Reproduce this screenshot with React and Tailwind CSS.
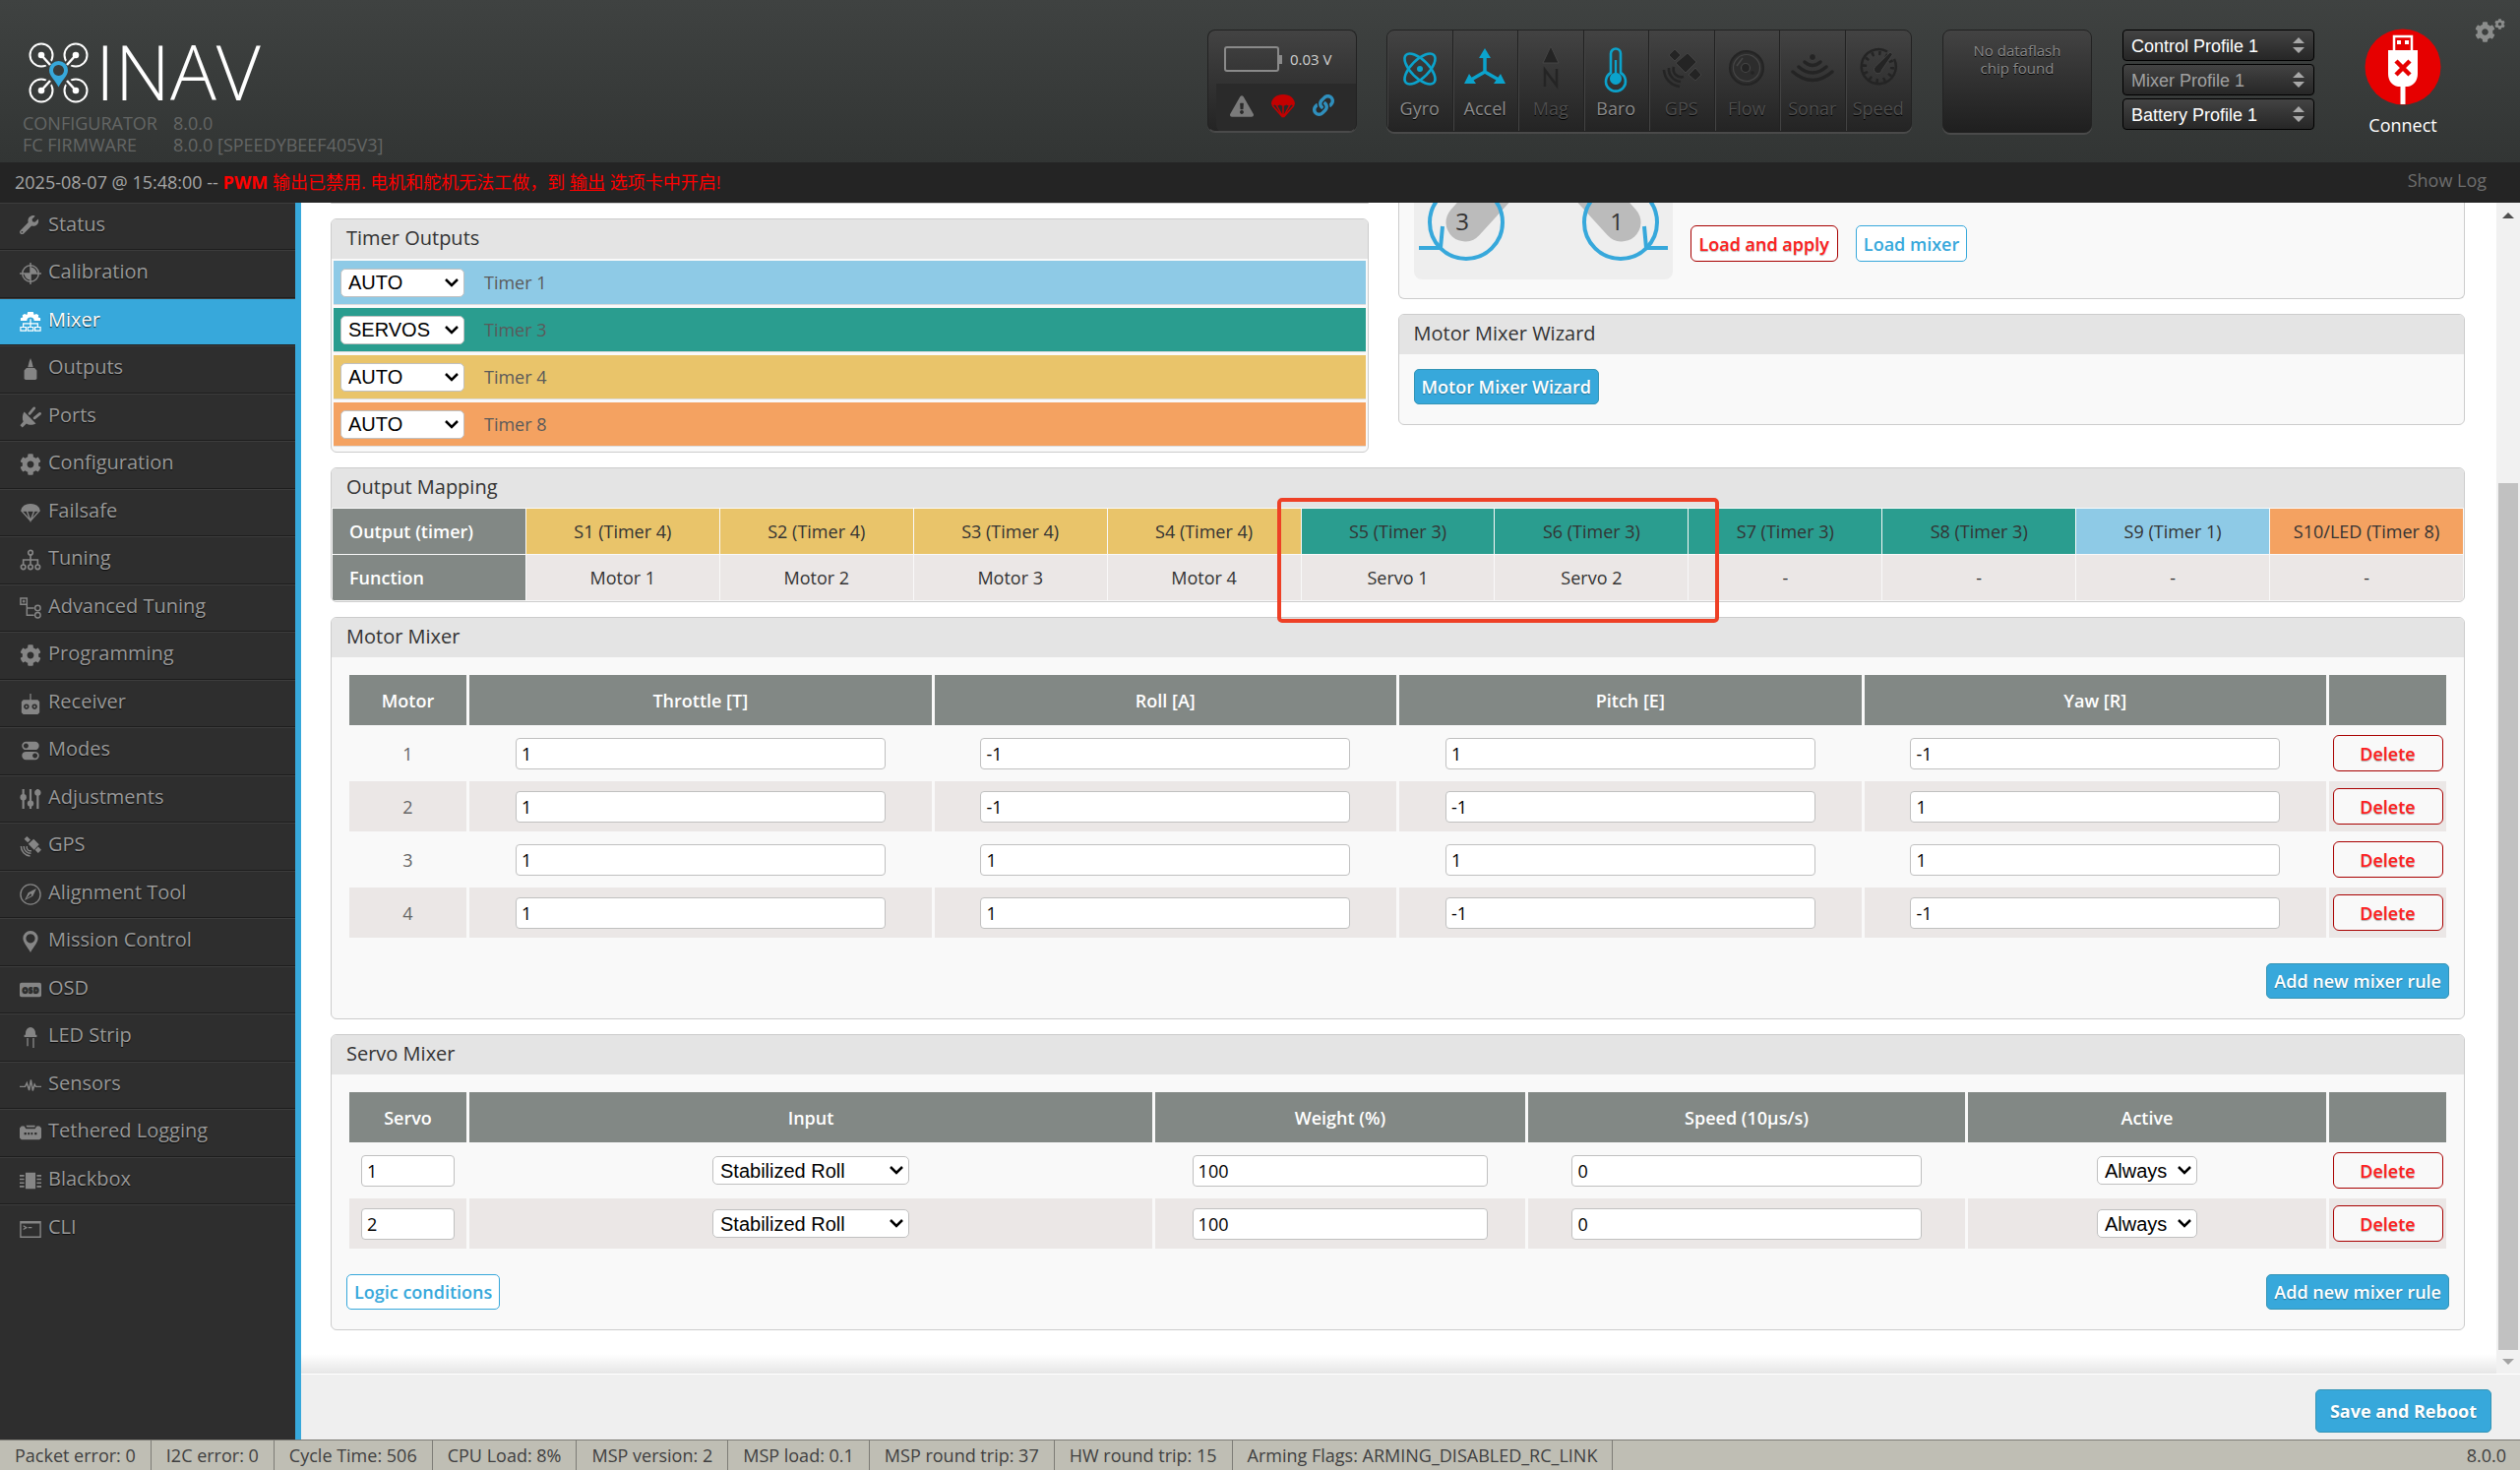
import { useState } from 'react'
import { FaWrench, FaCog, FaExclamationTriangle, FaLink } from 'react-icons/fa'

const sidebarItems = [
  { label: 'Status', icon: <FaWrench className="size-[21px]" /> },
  {
    label: 'Calibration',
    icon: (
      <>
        <circle cx="12" cy="12" r="9" fill="none" stroke="currentColor" strokeWidth="1.6" />
        <path d="M12 0v24M0 12h24" stroke="currentColor" strokeWidth="1.6" />
        <path d="M12 12V5a7 7 0 0 1 7 7zM12 12v7a7 7 0 0 1-7-7z" />
      </>
    ),
  },
  {
    label: 'Mixer',
    icon: (
      <>
        <path d="M1 11V8l2.500-.8L3 4.500l2.500-1.300L8 4.300 9 1h6l1 3.300 2.500-1.100L21 4.500l-.5 2.700L23 8v3h-7a4 4 0 0 0-8 0z" />
        <path d="M12 9v9M4 18v-4h16v4" fill="none" stroke="currentColor" strokeWidth="1.400" />
        <path d="M1 18h6v4H1zM9 18h6v4H9zM17 18h6v4h-6z" fill="none" stroke="currentColor" strokeWidth="1.300" />
      </>
    ),
  },
  { label: 'Outputs', icon: <path d="M5 23v-9.500L7.500 11h9l2.500 2.500V23l-1.500 1h-11zM9 10l1.500-6L12 0l1.500 4L15 10z" /> },
  {
    label: 'Ports',
    icon: (
      <>
        <path d="M5 6l13 13c-3.500 2-8 2-10.500 0L3 23.500.5 21 4 17C2.500 14 3 9 5 6z" />
        <path d="M11 8l5-6M16.500 13l6-5" stroke="currentColor" strokeWidth="3" strokeLinecap="round" />
      </>
    ),
  },
  { label: 'Configuration', icon: <FaCog className="size-6" /> },
  {
    label: 'Failsafe',
    icon: (
      <path
        d="M2 10C3 5 7 3 12 3s9 2 10 7L12 21zM2 10h20M8 10l4 11 4-11"
        fill="none"
        stroke="currentColor"
        strokeWidth="1.500"
      />
    ),
    cap: 'M2 10C3 5 7 3 12 3s9 2 10 7z',
  },
  {
    label: 'Tuning',
    icon: (
      <g fill="none" stroke="currentColor" strokeWidth="1.800">
        <circle cx="12" cy="4" r="2.500" />
        <circle cx="4" cy="20" r="2.500" />
        <circle cx="12" cy="20" r="2.500" />
        <circle cx="20" cy="20" r="2.500" />
        <path d="M12 6.500v11M4 17.500V12h16v5.500" />
      </g>
    ),
  },
  {
    label: 'Advanced Tuning',
    icon: (
      <g fill="none" stroke="currentColor" strokeWidth="1.600">
        <path d="M1 1h7v7H1zM4.500 3v3M3 4.500h3M8 8v12h8M8 12h8" />
        <circle cx="20" cy="12" r="3" />
        <circle cx="20" cy="20" r="3" />
      </g>
    ),
  },
  { label: 'Programming', icon: <FaCog className="size-6" /> },
  {
    label: 'Receiver',
    icon: (
      <path
        fillRule="evenodd"
        d="M11.300 1h1.400v7H20l2 2v12l-2 2H4l-2-2V10l2-2h7.300zM7.500 12.500a3 3 0 1 0 .01 0zM16.500 12.500a3 3 0 1 0 .01 0zM7.500 14.500a1 1 0 1 1-.01 0zM16.500 14.500a1 1 0 1 1-.01 0z"
      />
    ),
  },
  {
    label: 'Modes',
    icon: (
      <path
        fillRule="evenodd"
        d="M7 2h10a4.500 4.500 0 0 1 0 9H7a4.500 4.500 0 0 1 0-9zm0 1.800a2.700 2.700 0 1 0 .01 0zM7 13h10a4.500 4.500 0 0 1 0 9H7a4.500 4.500 0 0 1 0-9zm10 1.800a2.700 2.700 0 1 0 .01 0z"
      />
    ),
  },
  {
    label: 'Adjustments',
    icon: (
      <>
        <path d="M4 1v22M12 1v22M20 1v22" stroke="currentColor" strokeWidth="2.400" />
        <circle cx="4" cy="10" r="3.500" />
        <circle cx="12" cy="17" r="3.500" />
        <circle cx="20" cy="5" r="3.500" />
      </>
    ),
  },
  {
    label: 'GPS',
    icon: (
      <>
        <path d="M5 4l3-3 4 4-3 3zM9.500 9.500l6-5.500 6 6-5.500 6zM17 16l3.500-3.500L24 16l-3.500 3.500z" />
        <path
          d="M8 12a4 4 0 0 0 5 5M4.500 12a8 8 0 0 0 8 8M1.500 12a11 11 0 0 0 10 11"
          fill="none"
          stroke="currentColor"
          strokeWidth="1.600"
        />
      </>
    ),
  },
  {
    label: 'Alignment Tool',
    icon: (
      <>
        <circle cx="12" cy="12" r="11" fill="none" stroke="currentColor" strokeWidth="1.500" />
        <path fillRule="evenodd" d="M18.500 5.500L14.500 14 5.500 18.500 9.500 10zM12 11l-4.500 5.500L13.500 13z" />
      </>
    ),
  },
  {
    label: 'Mission Control',
    icon: <path fillRule="evenodd" d="M12 0a8.300 8.300 0 0 1 8.300 8.300C20.300 13 15.500 18 12 24 8.500 18 3.700 13 3.700 8.300A8.300 8.300 0 0 1 12 0zm0 3.500a5 5 0 1 0 .01 0z" />,
  },
  {
    label: 'OSD',
    icon: (
      <>
        <rect x="0" y="4" width="24" height="16" rx="2" />
        <text x="12" y="15.500" textAnchor="middle" fontSize="9" fontWeight="800" fill="#2e2e2e" fontFamily="Open Sans, sans-serif">
          OSD
        </text>
      </>
    ),
  },
  { label: 'LED Strip', icon: <path d="M6.500 8a5.500 7 0 0 1 11 0v1.500H19V12H5V9.500h1.500zM8 13h1.500v9H8zM14.500 13H16v11h-1.500z" /> },
  {
    label: 'Sensors',
    icon: <path d="M0 13.500h6l2-4 2.500 8L12.500 6l2 12 2-7 1.500 2.500h6" fill="none" stroke="currentColor" strokeWidth="1.600" />,
  },
  {
    label: 'Tethered Logging',
    icon: (
      <path
        fillRule="evenodd"
        d="M0 7l2-2h3l2 3h10l2-3h3l2 2v11l-2 2H2l-2-2zM7 4h10v2H8zM5 12h2.500v2.500H5zM9 12h2v2.500H9zM12.500 12h2v2.500h-2zM16.500 12H19v2.500h-2.500z"
      />
    ),
  },
  {
    label: 'Blackbox',
    icon: <path d="M6.500 3h11v18h-11zM0 5.500h5v1.800H0zM0 9.500h5v1.800H0zM0 13.500h5v1.800H0zM0 17.500h5v1.800H0zM19 5.500h5v1.800h-5zM19 9.500h5v1.800h-5zM19 13.500h5v1.800h-5zM19 17.500h5v1.800h-5z" />,
  },
  {
    label: 'CLI',
    icon: (
      <>
        <path d="M1 4h22v17H1z" fill="none" stroke="currentColor" strokeWidth="1.500" />
        <path d="M1 3.500h22v2.500H1z" />
        <path d="M4 8.500l3.500 2L4 12.500M9.500 10.500h4" fill="none" stroke="currentColor" strokeWidth="1.300" />
      </>
    ),
  },
]

const sensors = [
  {
    label: 'Gyro',
    active: true,
    icon: (
      <>
        <g fill="none" strokeWidth="2.600">
          <ellipse cx="22" cy="22" rx="20" ry="9" transform="rotate(45 22 22)" />
          <ellipse cx="22" cy="22" rx="20" ry="9" transform="rotate(-45 22 22)" />
        </g>
        <circle cx="22" cy="22" r="3" stroke="none" />
      </>
    ),
  },
  {
    label: 'Accel',
    active: true,
    icon: (
      <>
        <path d="M22 25V8M22 25L8 33M22 25l14 8" fill="none" strokeWidth="3.500" />
        <path d="M22 1l6 10H16zM1 37l5-10 7 10zM43 37l-5-10-7 10z" stroke="none" />
      </>
    ),
  },
  {
    label: 'Mag',
    icon: (
      <>
        <path d="M22-1l8 17H14z" strokeWidth="1" stroke="#454545" />
        <path d="M16 40V23l12 16V22" fill="none" strokeWidth="2.500" />
      </>
    ),
  },
  {
    label: 'Baro',
    active: true,
    icon: (
      <>
        <path d="M17 26V6.500a5 5 0 0 1 10 0V26a10 10 0 1 1-10 0z" fill="none" strokeWidth="2.600" />
        <path d="M20.800 13h2.400v13a6 6 0 1 1-2.400 0z" stroke="none" />
      </>
    ),
  },
  {
    label: 'GPS',
    icon: (
      <>
        <path d="M9 8l6-6 6 6-6 6zM16 16l12-10 9 9-11 11zM29 28l7-7 6 7-6 6z" stroke="#484848" strokeWidth="0.800" />
        <path d="M14 20a8 8 0 0 0 10 10M9 21a13 13 0 0 0 12 14M4 23a18 18 0 0 0 16 17" fill="none" strokeWidth="2.600" />
      </>
    ),
  },
  {
    label: 'Flow',
    icon: (
      <>
        <circle cx="22" cy="21" r="17" strokeWidth="2" fill="#2d2d2d" />
        <circle cx="22" cy="21" r="13.500" fill="none" stroke="#464646" strokeWidth="1.200" />
        <circle cx="21" cy="21" r="4.500" stroke="#464646" strokeWidth="1.200" />
        <path d="M12 19l6-8" stroke="#464646" strokeWidth="1.500" />
        <circle cx="28" cy="26" r="1.800" stroke="none" />
      </>
    ),
  },
  {
    label: 'Sonar',
    icon: (
      <>
        <circle cx="22" cy="10" r="3.500" stroke="#404040" strokeWidth="1" />
        <path d="M14 15q8 7 16 0M8 20q14 12 28 0M2 25q20 17 40 0" fill="none" strokeWidth="3.500" strokeLinecap="round" />
      </>
    ),
  },
  {
    label: 'Speed',
    icon: (
      <>
        <path d="M31 4.500A17.500 17.500 0 1 0 38 12" fill="none" strokeWidth="2.500" />
        <circle cx="22" cy="20" r="14" fill="none" strokeDasharray="2.500 4.800" strokeWidth="4" />
        <path d="M18.500 20L34 5l2.500 2L25.500 23a4 4 0 1 1-7-3z" stroke="#484848" strokeWidth="0.800" />
      </>
    ),
  },
]

const profiles = [
  { label: 'Control Profile 1', color: 'text-white' },
  { label: 'Mixer Profile 1', color: 'text-[#a0a0a0]' },
  { label: 'Battery Profile 1', color: 'text-white' },
]

const timers = [
  { name: 'Timer 1', mode: 'AUTO', bg: 'bg-[#8ecae6]' },
  { name: 'Timer 3', mode: 'SERVOS', bg: 'bg-[#2a9d8f]' },
  { name: 'Timer 4', mode: 'AUTO', bg: 'bg-[#e9c46a]' },
  { name: 'Timer 8', mode: 'AUTO', bg: 'bg-[#f4a261]' },
]

const outputs = [
  { name: 'S1 (Timer 4)', fn: 'Motor 1', bg: 'bg-[#e9c46a]' },
  { name: 'S2 (Timer 4)', fn: 'Motor 2', bg: 'bg-[#e9c46a]' },
  { name: 'S3 (Timer 4)', fn: 'Motor 3', bg: 'bg-[#e9c46a]' },
  { name: 'S4 (Timer 4)', fn: 'Motor 4', bg: 'bg-[#e9c46a]' },
  { name: 'S5 (Timer 3)', fn: 'Servo 1', bg: 'bg-[#2a9d8f]' },
  { name: 'S6 (Timer 3)', fn: 'Servo 2', bg: 'bg-[#2a9d8f]' },
  { name: 'S7 (Timer 3)', fn: '-', bg: 'bg-[#2a9d8f]' },
  { name: 'S8 (Timer 3)', fn: '-', bg: 'bg-[#2a9d8f]' },
  { name: 'S9 (Timer 1)', fn: '-', bg: 'bg-[#8ecae6]' },
  { name: 'S10/LED (Timer 8)', fn: '-', bg: 'bg-[#f4a261]' },
]

const motorColumns = ['Throttle [T]', 'Roll [A]', 'Pitch [E]', 'Yaw [R]']

const motorRules = [
  [1, -1, 1, -1],
  [1, -1, -1, 1],
  [1, 1, 1, 1],
  [1, 1, -1, -1],
]

const servoRules = [
  { servo: 1, input: 'Stabilized Roll', weight: 100, speed: 0, active: 'Always' },
  { servo: 2, input: 'Stabilized Roll', weight: 100, speed: 0, active: 'Always' },
]

const statusItems = [
  'Packet error: 0',
  'I2C error: 0',
  'Cycle Time: 506',
  'CPU Load: 8%',
  'MSP version: 2',
  'MSP load: 0.1',
  'MSP round trip: 37',
  'HW round trip: 15',
  'Arming Flags: ARMING_DISABLED_RC_LINK',
]

const headCell = 'h-[51px] bg-[#828885] p-0 text-center font-semibold text-white'

function Logo() {
  const rotors = [
    [13, 13, 22, 23],
    [48, 13, 39, 23],
    [13, 49, 22, 39],
    [48, 49, 39, 39],
  ]
  return (
    <div className="flex h-[62px] items-start gap-[7px]">
      <svg className="h-[62px] w-[61px]" viewBox="0 0 61 62" fill="none">
        {rotors.map(([cx, cy, x, y]) => (
          <g key={`${cx}-${cy}`}>
            <circle cx={cx} cy={cy} r="11.500" stroke="#fff" strokeWidth="2" />
            <path d={`M${cx} ${cy}L${x} ${y}`} stroke="#3a3c3b" strokeWidth="7" />
            <path d={`M${cx} ${cy}L${x} ${y}`} stroke="#fff" strokeWidth="2.500" />
            <circle cx={cx} cy={cy} r="3.300" fill="#fff" />
          </g>
        ))}
        <path
          fill="#37a8db"
          fillRule="evenodd"
          d="M30.500 19a9.500 9.500 0 0 1 9.500 9.500c0 6-6.500 10.500-9.500 17-3-6.500-9.500-11-9.500-17a9.500 9.500 0 0 1 9.500-9.500zm0 4a5.500 5.500 0 1 0 .01 0z"
        />
      </svg>
      <span className="text-[78px] leading-[58px] font-light text-white">INAV</span>
    </div>
  )
}

function Battery() {
  return (
    <div className="h-[104px] w-[152px] overflow-hidden rounded-lg border border-[#222] border-b-[#4a4a4a] bg-linear-to-b from-[#434343] to-[#242424] shadow-[0_1px_0_#4a4a4a]">
      <div className="flex h-[54px] items-end gap-2 pb-3 pl-4">
        <div className="flex items-center">
          <div className="h-[26px] w-[56px] rounded-[3px] border-2 border-[#8a8a8a]" />
          <div className="h-[9px] w-[3px] bg-[#8a8a8a]" />
        </div>
        <span className="text-[15px] leading-[26px] text-[#d0d0d0]">0.03 V</span>
      </div>
      <div className="ml-2 flex h-[50px] items-start gap-[18px] rounded-bl-lg bg-[#2a2a2a] pt-[11px] pl-[14px]">
        <FaExclamationTriangle className="size-6 text-[#7a7a7a]" />
        <svg className="size-6" viewBox="0 0 24 24" fill="#c40000">
          <path d="M0 10C0 4 5 0 12 0s12 4 12 10l-1.500 1.500-2-1-2 1.500-3-1.500-3.500 1.500-3.500-1.500-3 1.500-2-1.500-2 1z" />
          <path d="M1 11l10.500 12M5.500 11.500L12 23M12 11.500V23M18.500 11.500L12 23M23 11L12.500 23" stroke="#c40000" strokeWidth="1.500" />
        </svg>
        <FaLink className="size-[22px] text-[#2f8fbd]" />
      </div>
    </div>
  )
}

function SensorBar() {
  return (
    <div className="grid h-[104px] w-[534px] grid-cols-8 overflow-hidden rounded-lg border border-[#222] bg-linear-to-b from-[#434343] to-[#242424] shadow-[0_2px_0_#4a4a4a]">
      {sensors.map((sensor) => (
        <div
          key={sensor.label}
          className={`flex flex-col items-center border-r border-[#222] pt-[17px] shadow-[inset_1px_0_0_#434343] last:border-r-0 ${
            sensor.active ? 'text-[#8c8c8c]' : 'text-[#4e4e4e]'
          }`}
        >
          <svg
            className={`size-11 overflow-visible ${sensor.active ? 'text-[#0ba3cc]' : 'text-[#242424]'}`}
            viewBox="0 0 44 44"
            fill="currentColor"
            stroke="currentColor"
          >
            {sensor.icon}
          </svg>
          <span className="mt-[6px] text-[18px] leading-6 [text-shadow:0_1px_0_#000]">{sensor.label}</span>
        </div>
      ))}
    </div>
  )
}

function ProfileSelects() {
  return (
    <div className="flex w-[195px] flex-col gap-[3px]">
      {profiles.map((profile) => (
        <div key={profile.label} className="relative">
          <select
            aria-label={profile.label}
            className={`block h-[32px] w-full appearance-none rounded-[4px] border border-black bg-linear-to-b from-[#434343] to-[#262626] pt-[2px] pl-2 font-['Liberation_Sans',Arial,sans-serif] text-[18px] leading-6 ${profile.color}`}
          >
            <option>{profile.label}</option>
          </select>
          <svg className="pointer-events-none absolute top-2 right-[10px] h-4 w-3" viewBox="0 0 12 16" fill="#a8a8a8">
            <path d="M6 0l6 6H0zM6 16L0 10h12z" />
          </svg>
        </div>
      ))}
    </div>
  )
}

function Header() {
  return (
    <header className="flex h-[165px] items-start bg-linear-to-b from-[#3f4241] to-[#323534]">
      <div className="pt-[43px] pl-[29px]">
        <Logo />
        <dl className="-ml-[6px] mt-[9px] grid grid-cols-[153px_auto] text-[18px] leading-[22px] text-[#646665]">
          <dt>CONFIGURATOR</dt>
          <dd>8.0.0</dd>
          <dt>FC FIRMWARE</dt>
          <dd>8.0.0 [SPEEDYBEEF405V3]</dd>
        </dl>
      </div>
      <div className="ml-auto flex items-start pt-[30px]">
        <Battery />
        <div className="ml-[30px]">
          <SensorBar />
        </div>
        <div className="mr-[31px] ml-[31px] h-[105px] w-[152px] rounded-lg border border-[#222] bg-linear-to-b from-[#434343] to-[#1f1f1f] px-5 pt-[11px] text-center text-[15px] leading-[18px] text-[#8a8a8a] shadow-[0_2px_0_#4a4a4a] [text-shadow:0_1px_0_#000]">
          No dataflash chip found
        </div>
        <ProfileSelects />
        <button className="-mt-px ml-[49px] flex w-[82px] flex-col items-center text-white">
          <svg className="size-[78px]" viewBox="0 0 78 78">
            <circle cx="39" cy="39" r="38.500" fill="#e60000" />
            <path d="M30 23V8h18v15" fill="none" stroke="#fff" strokeWidth="2.500" />
            <path d="M33 12h4v4h-4zM41 12h4v4h-4zM24 22h30v24c0 7-4 12-10 13h-2.500v18h-5V59H34c-6-1-10-6-10-13z" fill="#fff" />
            <path d="M32 33l14 14M46 33L32 47" stroke="#e60000" strokeWidth="4.500" />
          </svg>
          <span className="mt-2 text-[18px] leading-6">Connect</span>
        </button>
        <button aria-label="Options" className="relative -mt-[11px] mr-[15px] ml-8 h-6 w-[31px] text-[#8b8d8c]">
          <FaCog className="absolute bottom-0 left-0 size-[21px]" />
          <FaCog className="absolute top-0 right-0 size-[11px]" />
        </button>
      </div>
    </header>
  )
}

function LogBar() {
  return (
    <div className="flex h-[41px] items-center justify-between bg-[#242424] pr-8 pl-[15px] text-[18px] leading-6">
      <p className="pb-px text-[#a6a6a6]">
        2025-08-07 @ 15:48:00 --{' '}
        <span className="text-[#f00]">
          <b>PWM</b> 输出已禁用. 电机和舵机无法工做，到{' '}
          <a href="#outputs" className="underline">
            输出
          </a>{' '}
          选项卡中开启!
        </span>
      </p>
      <a href="#log" className="pr-[2px] pb-[5px] text-[#6e6e6e]">
        Show Log
      </a>
    </div>
  )
}

function Sidebar() {
  const [active, setActive] = useState('Mixer')

  return (
    <nav className="w-[306px] flex-none border-r-[6px] border-[#37a8db] bg-[#2e2e2e]">
      <ul>
        {sidebarItems.map((item) => {
          const isActive = item.label === active
          return (
            <li
              key={item.label}
              className="border-t border-b border-t-[#3d3d3d] border-b-[#1d1d1d] last:border-b-0 odd:h-[48px] even:h-[49px]"
            >
              <a
                href="#"
                onClick={() => setActive(item.label)}
                className={`flex h-full items-center gap-[7px] pb-[5px] pl-5 text-[20px] leading-[26px] [text-shadow:0_1px_1px_rgba(0,0,0,0.8)] ${
                  isActive ? 'bg-[#37a8db] font-medium text-white' : 'text-[#999]'
                }`}
              >
                <svg
                  className={`mt-1 size-[22px] flex-none ${isActive ? 'text-white' : 'text-[#858585]'}`}
                  viewBox="0 0 24 24"
                  fill="currentColor"
                >
                  {item.cap && <path d={item.cap} />}
                  {item.icon}
                </svg>
                {item.label}
              </a>
            </li>
          )
        })}
      </ul>
    </nav>
  )
}

function Panel({ title, children, className = '' }) {
  return (
    <section className={`overflow-hidden rounded-[6px] border border-[#ccc] bg-[#f9f9f9] ${className}`}>
      <h2 className="h-10 bg-[#e4e4e4] pl-[15px] text-[20px] leading-[38px] text-[#333]">{title}</h2>
      {children}
    </section>
  )
}

function Select({ label, value, className = '' }) {
  return (
    <div className={`relative inline-block align-middle ${className}`}>
      <select
        aria-label={label}
        className="block h-[29px] w-full appearance-none rounded-[5px] border border-[#c0c0c0] bg-white pl-[7px] font-['Liberation_Sans',Arial,sans-serif] text-[20px] leading-[26px] text-black"
      >
        <option>{value}</option>
      </select>
      <svg
        className="pointer-events-none absolute top-[10px] right-[6px] h-[9px] w-[14px]"
        viewBox="0 0 14 9"
        fill="none"
        stroke="#000"
        strokeWidth="2.500"
      >
        <path d="M1 1l6 6 6-6" />
      </svg>
    </div>
  )
}

function NumberInput({ label, value }) {
  return (
    <input
      type="text"
      aria-label={label}
      defaultValue={value}
      className="mx-auto block h-[32px] w-4/5 rounded-[4px] border border-[#c0c0c0] bg-white pl-[5px] text-[18px] leading-6 text-black"
    />
  )
}

function DeleteButton() {
  return (
    <button className="mx-auto block h-[37px] w-[112px] rounded-[6px] border border-[#a80000] bg-[#f9f9f9] text-[18px] leading-6 font-semibold text-[#ff2020] [text-shadow:0_1px_1px_rgba(0,0,0,0.3)]">
      Delete
    </button>
  )
}

function BlueButton({ children, className = 'h-[36px] px-[7px] font-semibold' }) {
  return (
    <button
      className={`rounded-[5px] border border-[#3394b5] bg-[#37a8db] text-[18px] leading-6 text-white [text-shadow:0_1px_1px_rgba(0,0,0,0.3)] ${className}`}
    >
      {children}
    </button>
  )
}

function OutlineButton({ children, className = '' }) {
  return (
    <button
      className={`rounded-[5px] border border-[#37a8db] bg-white px-[7px] text-[18px] leading-6 font-semibold text-[#37a8db] ${className}`}
    >
      {children}
    </button>
  )
}

function TimerOutputs() {
  return (
    <Panel title="Timer Outputs">
      <div className="flex flex-col gap-[3px] px-[2px] pt-[2px] pb-[5px]">
        {timers.map((timer) => (
          <div key={timer.name} className={`flex h-[45px] items-center border-b border-[#dcdcdc] pl-[7px] ${timer.bg}`}>
            <Select label={timer.name} value={timer.mode} className="w-[126px]" />
            <span className="ml-5 text-[18px] leading-6 text-[#5a5a5a]">{timer.name}</span>
          </div>
        ))}
      </div>
    </Panel>
  )
}

function MixerPreset() {
  return (
    <section className="mb-[15px] flex h-[98px] items-start rounded-b-[6px] border border-t-0 border-[#ccc] bg-[#f9f9f9] pl-[15px]">
      <svg className="h-[78px] w-[263px] flex-none rounded-b-lg bg-[#eee]" viewBox="0 0 263 78">
        <path d="M52 20l60-66M211 20l-60-66" stroke="#bbb" strokeWidth="39" strokeLinecap="round" />
        <g fill="none" stroke="#37a8db" strokeWidth="4">
          <circle cx="53" cy="20" r="37" />
          <circle cx="210" cy="20" r="37" />
          <path d="M5 46h22l2-22M258 46h-22l-2-22" />
        </g>
        <g fill="#333" fontSize="24" textAnchor="middle" fontFamily="Open Sans, sans-serif">
          <text x="49" y="28">3</text>
          <text x="206" y="28">1</text>
        </g>
      </svg>
      <div className="mt-[23px] ml-[18px] flex gap-[18px]">
        <button className="h-[37px] rounded-[6px] border border-[#a80000] bg-white px-2 text-[18px] leading-6 font-semibold text-[#ff2020] [text-shadow:0_1px_1px_rgba(0,0,0,0.3)]">
          Load and apply
        </button>
        <OutlineButton className="h-[37px]">Load mixer</OutlineButton>
      </div>
    </section>
  )
}

function OutputMapping() {
  return (
    <div className="relative">
      <Panel title="Output Mapping">
        <table className="w-full table-fixed border-separate border-spacing-px text-center text-[18px] leading-6 text-[#333]">
          <tbody>
            <tr>
              <th className="h-[46px] bg-[#828885] pl-[17px] text-left font-semibold text-white">Output (timer)</th>
              {outputs.map((output) => (
                <td key={output.name} className={`p-0 ${output.bg}`}>
                  {output.name}
                </td>
              ))}
            </tr>
            <tr>
              <th className="h-[46px] bg-[#828885] pl-[17px] text-left font-semibold text-white">Function</th>
              {outputs.map((output) => (
                <td key={output.name} className="bg-[#ebe7e6] p-0">
                  {output.fn}
                </td>
              ))}
            </tr>
          </tbody>
        </table>
      </Panel>
      {/* Highlight around the servo outputs */}
      <div className="pointer-events-none absolute top-[31px] left-[962px] h-[127px] w-[449px] rounded-[5px] border-4 border-[#ee4026]" />
    </div>
  )
}

function MotorMixer() {
  return (
    <Panel title="Motor Mixer">
      <div className="px-[15px] pt-[15px] pb-5">
        <table className="w-full table-fixed border-separate border-spacing-[3px] text-center text-[18px] leading-6">
          <colgroup>
            <col className="w-[119px]" />
            <col />
            <col />
            <col />
            <col />
            <col className="w-[119px]" />
          </colgroup>
          <thead>
            <tr>
              <th className={headCell}>Motor</th>
              {motorColumns.map((column) => (
                <th key={column} className={headCell}>
                  {column}
                </th>
              ))}
              <th className={headCell} aria-label="Actions" />
            </tr>
          </thead>
          <tbody>
            {motorRules.map((rule, index) => (
              <tr key={index} className="[&:nth-child(even)>td]:bg-[#ebe7e6]">
                <td className="h-[51px] p-0 text-[#666]">{index + 1}</td>
                {rule.map((value, i) => (
                  <td key={motorColumns[i]} className="p-0">
                    <NumberInput label={`${motorColumns[i]} ${index + 1}`} value={value} />
                  </td>
                ))}
                <td className="p-0">
                  <DeleteButton />
                </td>
              </tr>
            ))}
          </tbody>
        </table>
        <div className="mt-[23px] flex justify-end">
          <BlueButton>Add new mixer rule</BlueButton>
        </div>
      </div>
    </Panel>
  )
}

function ServoMixer() {
  return (
    <Panel title="Servo Mixer">
      <div className="px-[15px] pt-[15px] pb-5">
        <table className="w-full table-fixed border-separate border-spacing-[3px] text-center text-[18px] leading-6">
          <colgroup>
            <col className="w-[119px]" />
            <col />
            <col className="w-[376px]" />
            <col className="w-[444px]" />
            <col className="w-[364px]" />
            <col className="w-[119px]" />
          </colgroup>
          <thead>
            <tr>
              <th className={headCell}>Servo</th>
              <th className={headCell}>Input</th>
              <th className={headCell}>Weight (%)</th>
              <th className={headCell}>Speed (10µs/s)</th>
              <th className={headCell}>Active</th>
              <th className={headCell} aria-label="Actions" />
            </tr>
          </thead>
          <tbody>
            {servoRules.map((rule) => (
              <tr key={rule.servo} className="[&:nth-child(even)>td]:bg-[#ebe7e6]">
                <td className="h-[51px] p-0">
                  <NumberInput label="Servo" value={rule.servo} />
                </td>
                <td className="p-0">
                  <Select label="Input" value={rule.input} className="w-[200px] text-left" />
                </td>
                <td className="p-0">
                  <NumberInput label="Weight" value={rule.weight} />
                </td>
                <td className="p-0">
                  <NumberInput label="Speed" value={rule.speed} />
                </td>
                <td className="p-0">
                  <Select label="Active" value={rule.active} className="w-[102px] text-left" />
                </td>
                <td className="p-0">
                  <DeleteButton />
                </td>
              </tr>
            ))}
          </tbody>
        </table>
        <div className="mt-[23px] flex justify-between">
          <OutlineButton className="h-[36px]">Logic conditions</OutlineButton>
          <BlueButton>Add new mixer rule</BlueButton>
        </div>
      </div>
    </Panel>
  )
}

function Scrollbar() {
  return (
    <div className="flex w-6 flex-none flex-col bg-[#f1f1f1] px-[2px]" aria-hidden="true">
      <svg className="h-6 w-5" viewBox="0 0 20 24" fill="#505050">
        <path d="M10 10l6 6H4z" />
      </svg>
      <div className="h-[261px]" />
      <div className="flex-1 bg-[#c1c1c1]" />
      <svg className="h-6 w-5" viewBox="0 0 20 24" fill="#a3a3a3">
        <path d="M10 15l6-6H4z" />
      </svg>
    </div>
  )
}

function StatusBar() {
  return (
    <footer className="flex h-[31px] items-stretch border-t border-[#7d7c76] bg-[#bfbeb4] text-[18px] leading-[30px] text-[#404040]">
      {statusItems.map((item) => (
        <span key={item} className="border-r border-[#7d7c76] px-[15px]">
          {item}
        </span>
      ))}
      <span className="ml-auto pr-[14px]">8.0.0</span>
    </footer>
  )
}

function App() {
  return (
    <div className="flex min-h-screen flex-col bg-white font-['Open_Sans','Noto_Sans_CJK_SC',sans-serif]">
      <Header />
      <LogBar />
      <div className="flex flex-1">
        <Sidebar />
        <div className="flex min-w-0 flex-1 flex-col">
          <div className="flex flex-1">
            <main className="relative flex min-w-0 flex-1 flex-col pr-8 pl-[30px]">
              <div className="mb-[15px] grid grid-cols-2 items-start">
                <div className="pr-[30px]">
                  <div className="mb-[15px] h-px rounded-b bg-[#ccc]" />
                  <TimerOutputs />
                </div>
                <div>
                  <MixerPreset />
                  <Panel title="Motor Mixer Wizard">
                    <div className="px-[15px] pt-[15px] pb-5">
                      <BlueButton>Motor Mixer Wizard</BlueButton>
                    </div>
                  </Panel>
                </div>
              </div>
              <div className="flex flex-col gap-[15px]">
                <OutputMapping />
                <MotorMixer />
                <ServoMixer />
              </div>
              <div className="absolute inset-x-0 bottom-0 h-5 bg-linear-to-b from-transparent to-black/10" />
            </main>
            <Scrollbar />
          </div>
          <div className="flex h-[67px] items-start justify-end border-t border-white bg-[#efefef] pt-[15px] pr-[29px]">
            <BlueButton className="h-[44px] px-[14px] font-bold">Save and Reboot</BlueButton>
          </div>
        </div>
      </div>
      <StatusBar />
    </div>
  )
}

export default App
